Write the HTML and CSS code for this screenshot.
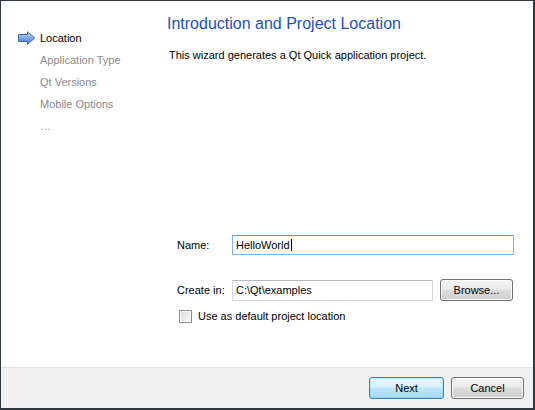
FILE: index.html
```html
<!DOCTYPE html>
<html>
<head>
<meta charset="utf-8">
<link rel="stylesheet" href="styles.css">
</head>
<body>
<div class="window">
  <div class="main">
    <nav class="sidebar">
      <div class="step current">
        <svg class="arrow" width="18" height="14" viewBox="0 0 18 14">
          <defs>
            <linearGradient id="ag" x1="0" y1="0" x2="0" y2="1">
              <stop offset="0" stop-color="#c4dcf8"/>
              <stop offset="0.5" stop-color="#7fabe6"/>
              <stop offset="1" stop-color="#3f78cf"/>
            </linearGradient>
          </defs>
          <path d="M0.5 3.5 H9.5 V0.8 L16.8 7 L9.5 13.2 V10.5 H0.5 Z" fill="url(#ag)" stroke="#3d69ae" stroke-width="1" stroke-linejoin="round"/>
        </svg>
        <span>Location</span>
      </div>
      <div class="step">Application Type</div>
      <div class="step">Qt Versions</div>
      <div class="step">Mobile Options</div>
      <div class="step">…</div>
    </nav>
    <section class="content">
      <h1 class="title">Introduction and Project Location</h1>
      <p class="desc">This wizard generates a Qt Quick application project.</p>
      <div class="form">
        <div class="row name-row">
          <label class="label">Name:</label>
          <div class="input focus"><span class="caret">HelloWorld</span></div>
        </div>
        <div class="row create-row">
          <label class="label">Create in:</label>
          <div class="input path">C:\Qt\examples</div>
          <button class="btn browse">Browse...</button>
        </div>
        <div class="check-row">
          <span class="checkbox"></span>
          <span>Use as default project location</span>
        </div>
      </div>
    </section>
  </div>
  <footer class="footer">
    <button class="btn primary">Next</button>
    <button class="btn cancel">Cancel</button>
  </footer>
</div>
</body>
</html>
```

FILE: styles.css
```css
html, body {
  margin: 0;
  padding: 0;
  background: #ffffff;
}

.window {
  box-sizing: border-box;
  width: 535px;
  height: 410px;
  border: 1px solid #2f3740;
  border-right-width: 2px;
  border-bottom-width: 2px;
  display: flex;
  flex-direction: column;
  font-family: "Liberation Sans", Arial, sans-serif;
  font-size: 11px;
  color: #000;
  background: #fff;
}

.main {
  flex: 1;
  display: flex;
  min-height: 0;
}

.sidebar {
  width: 166px;
  padding-top: 26px;
  box-sizing: border-box;
}

.step {
  height: 22px;
  line-height: 22px;
  padding-left: 39px;
  color: #8a8a8a;
  white-space: nowrap;
}

.step.current {
  color: #000;
  display: flex;
  align-items: center;
  padding-left: 17px;
}

.arrow {
  display: block;
  margin-right: 4px;
}

.content {
  flex: 1;
  padding: 12px 19px 0 0;
}

.title {
  margin: 0;
  font-weight: normal;
  font-size: 16px;
  line-height: 22px;
  color: #1c52b5;
}

.desc {
  margin: 12px 0 0 2px;
  line-height: 16px;
}

.form {
  margin-top: 172px;
  padding-left: 10px;
}

.row {
  display: flex;
  align-items: center;
}

.label {
  width: 55px;
  flex: none;
}

.input {
  box-sizing: border-box;
  height: 20px;
  line-height: 18px;
  border: 1px solid #abadb3;
  border-top-color: #8e9198;
  padding: 0 3px;
  flex: 1;
  background: #fff;
}

.input.focus {
  border-color: #7eb4ea;
  border-top-color: #569de5;
}

.caret {
  border-right: 1px solid #000;
  padding-right: 1px;
}

.create-row {
  margin-top: 24px;
}

.input.path {
  flex: none;
  width: 201px;
  height: 21px;
  border-color: #d5d7da;
  border-top-color: #b7b9bd;
}

.btn {
  box-sizing: border-box;
  font-family: inherit;
  font-size: 11px;
  color: #000;
  height: 22px;
  width: 75px;
  padding: 0;
  border: 1px solid #707070;
  border-radius: 3px;
  background: linear-gradient(#f3f3f3 0%, #ebebeb 45%, #dddddd 50%, #cfcfcf 100%);
  box-shadow: inset 0 0 0 1px #fbfbfb;
}

.browse {
  margin-left: 7px;
  width: 73px;
}

.check-row {
  display: flex;
  align-items: center;
  margin-top: 7px;
  margin-left: 2px;
  height: 16px;
}

.checkbox {
  box-sizing: border-box;
  width: 13px;
  height: 13px;
  border: 1px solid #8e8f8f;
  background: linear-gradient(135deg, #dcdcdc, #fbfbfb);
  box-shadow: inset 0 0 0 1px #f4f4f4;
  margin-right: 6px;
}

.footer {
  box-sizing: border-box;
  height: 41px;
  flex: none;
  border-top: 1px solid #dfdfdf;
  background: #f0f0f0;
  display: flex;
  justify-content: flex-end;
  align-items: flex-start;
  gap: 7px;
  padding: 9px 9px 0 0;
}

.btn.cancel {
  width: 73px;
}

.btn.primary {
  border-color: #3c7fb1;
  background: linear-gradient(#eaf6fd 0%, #d9f0fc 45%, #bee6fd 50%, #a7d9f5 100%);
  box-shadow: inset 0 0 0 1px #48d6fb44;
}
```
